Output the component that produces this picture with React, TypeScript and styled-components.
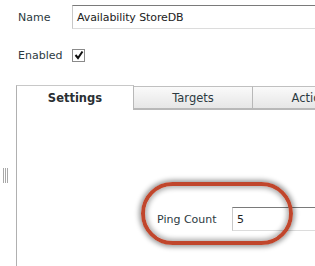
import React from "react";
import styled, { createGlobalStyle } from "styled-components";

const Global = createGlobalStyle`
  html, body { margin: 0; padding: 0; background: #fff; }
  body { font-family: "DejaVu Sans", Verdana, sans-serif; font-size: 11px; color: #2c3a42; }
  * { box-sizing: border-box; }
`;

const Page = styled.div`
  position: relative;
  width: 315px;
  height: 266px;
  overflow: hidden;
`;

const Row = styled.div<{ $top: number; $h: number }>`
  display: flex;
  align-items: center;
  padding-left: 18px;
  margin-top: ${(p) => p.$top}px;
  height: ${(p) => p.$h}px;
`;

const Label = styled.label<{ $w?: number }>`
  width: ${(p) => (p.$w ? `${p.$w}px` : "auto")};
  flex-shrink: 0;
  white-space: nowrap;
`;

const TextInput = styled.div<{ $w: number }>`
  width: ${(p) => p.$w}px;
  height: 100%;
  border: 1px solid #c8c8c8;
  border-top-color: #7a7a7a;
  border-bottom-color: #dcdcdc;
  display: flex;
  align-items: center;
  padding-left: 4px;
  font-size: 11px;
  letter-spacing: -0.1px;
  color: #222;
  white-space: nowrap;
  flex-shrink: 0;
`;

const Check = styled.span`
  width: 13px;
  height: 13px;
  border: 1px solid #8a8a8a;
  background: #fff;
  display: inline-flex;
  align-items: center;
  justify-content: center;
`;

const Tabs = styled.div`
  margin-top: 24px;
  margin-left: 16px;
  display: flex;
  align-items: flex-end;
  height: 24px;
`;

const Tab = styled.div<{ $w: number; $active?: boolean }>`
  width: ${(p) => p.$w}px;
  flex-shrink: 0;
  height: 24px;
  display: flex;
  align-items: center;
  justify-content: center;
  font-size: 11.5px;
  white-space: nowrap;
  overflow: hidden;
  color: ${(p) => (p.$active ? "#2a2f33" : "#2c3a42")};
  font-weight: ${(p) => (p.$active ? 700 : 400)};
  background: ${(p) => (p.$active ? "#fff" : "linear-gradient(#fafafa, #e6e6e6)")};
  border: 1px solid #b0b0b0;
  border-left: ${(p) => (p.$active ? "1px solid #b0b0b0" : "none")};
  border-bottom: ${(p) => (p.$active ? "none" : "2px solid #b8b8b8")};
  border-top-color: ${(p) => (p.$active ? "#c8c8c8" : "#c0c0c0")};
  padding-top: ${(p) => (p.$active ? 0 : 1)}px;
  border-right-color: #b8b8b8;
  ${(p) => (p.$active ? "margin-top: -1px; height: 25px;" : "")}
`;

const Panel = styled.div`
  margin-left: 16px;
  height: 160px;
  border-left: 1px solid #b0b0b0;
`;

const Handle = styled.div`
  position: absolute;
  left: 3px;
  top: 168px;
  display: flex;
  gap: 1px;
`;

const Grip = styled.span`
  width: 1px;
  height: 15px;
  background: #a8a8a8;
`;

const FieldRow = styled.div`
  position: absolute;
  left: 157px;
  top: 207px;
  height: 24px;
  display: flex;
  align-items: center;
`;

const Oval = styled.div`
  position: absolute;
  left: 141px;
  top: 182px;
  width: 152px;
  height: 63px;
  border: 4px solid #c0462c;
  border-radius: 32px;
  box-shadow: 0 0 5px 2px rgba(0, 0, 0, 0.4), inset 0 0 5px 2px rgba(0, 0, 0, 0.32);
`;

export default function App() {
  return (
    <Page>
      <Global />
      <Row $top={5} $h={24}>
        <Label $w={54}>Name</Label>
        <TextInput $w={260}>Availability StoreDB</TextInput>
      </Row>
      <Row $top={19} $h={14}>
        <Label $w={54}>Enabled</Label>
        <Check>
          <svg width="10" height="10" viewBox="0 0 10 10">
            <path d="M1.5 5 L4 8 L8.5 1.5" fill="none" stroke="#111" strokeWidth="2" />
          </svg>
        </Check>
      </Row>
      <Tabs>
        <Tab $w={118} $active>Settings</Tab>
        <Tab $w={119}>Targets</Tab>
        <Tab $w={120}>Actions</Tab>
      </Tabs>
      <Panel />
      <Handle>
        <Grip />
        <Grip />
        <Grip />
      </Handle>
      <FieldRow>
        <Label $w={75}>Ping Count</Label>
        <TextInput $w={100}>5</TextInput>
      </FieldRow>
      <Oval />
    </Page>
  );
}
